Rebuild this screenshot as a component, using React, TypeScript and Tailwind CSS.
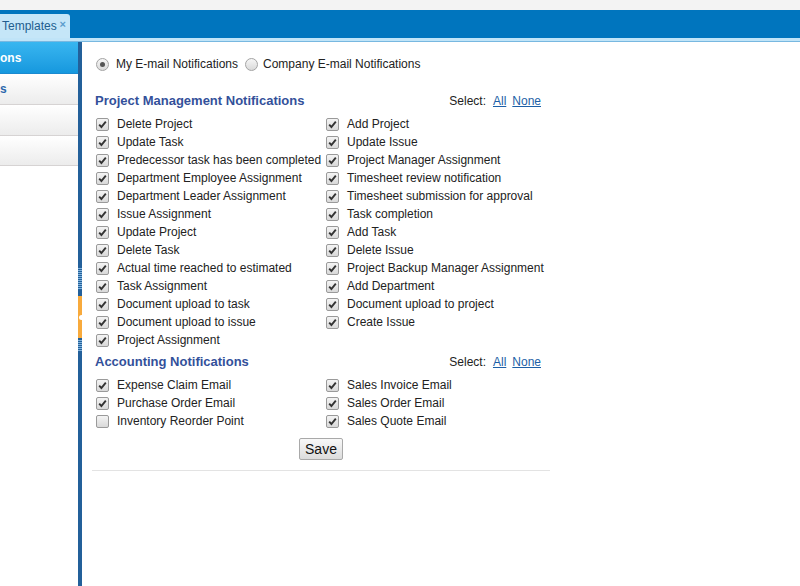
import React from 'react'

const pmLeft = [
  'Delete Project',
  'Update Task',
  'Predecessor task has been completed',
  'Department Employee Assignment',
  'Department Leader Assignment',
  'Issue Assignment',
  'Update Project',
  'Delete Task',
  'Actual time reached to estimated',
  'Task Assignment',
  'Document upload to task',
  'Document upload to issue',
  'Project Assignment',
]

const pmRight = [
  'Add Project',
  'Update Issue',
  'Project Manager Assignment',
  'Timesheet review notification',
  'Timesheet submission for approval',
  'Task completion',
  'Add Task',
  'Delete Issue',
  'Project Backup Manager Assignment',
  'Add Department',
  'Document upload to project',
  'Create Issue',
]

const accLeft = [
  { label: 'Expense Claim Email', on: true },
  { label: 'Purchase Order Email', on: true },
  { label: 'Inventory Reorder Point', on: false },
]

const accRight = [
  { label: 'Sales Invoice Email', on: true },
  { label: 'Sales Order Email', on: true },
  { label: 'Sales Quote Email', on: true },
]

function Box({ on }: { on: boolean }) {
  return (
    <span className="w-[13px] h-[13px] shrink-0 rounded-[2px] border border-[#9a9a9a] bg-gradient-to-b from-[#f4f4f4] to-[#d9d9d9] flex items-center justify-center">
      {on && (
        <svg width="9" height="9" viewBox="0 0 9 9">
          <path d="M1.2 4.6 L3.4 7 L7.8 1.6" fill="none" stroke="#333" strokeWidth="1.9" />
        </svg>
      )}
    </span>
  )
}

function Radio({ on }: { on: boolean }) {
  return (
    <span className="w-[13px] h-[13px] shrink-0 rounded-full border border-[#a3a3a3] bg-gradient-to-b from-[#f6f6f6] to-[#dadada] flex items-center justify-center">
      {on && <span className="w-[5px] h-[5px] rounded-full bg-[#555]" />}
    </span>
  )
}

function Item({ label, on }: { label: string; on: boolean }) {
  return (
    <div className="h-[18px] flex items-center gap-[8px] whitespace-nowrap">
      <Box on={on} />
      <span>{label}</span>
    </div>
  )
}

function SectionHead({ title }: { title: string }) {
  return (
    <div className="h-[16px] leading-[16px] flex justify-between pl-[3px] pr-[9px]">
      <span className="text-[13px] font-bold text-[#33509a]">{title}</span>
      <span className="text-[12px] text-[#222]">
        Select:
        <a className="ml-[7px] text-[#1d5fa6] underline">All</a>
        <a className="ml-[6px] text-[#1d5fa6] underline">None</a>
      </span>
    </div>
  )
}

export default function App() {
  const pmRows = pmLeft.map((l, i) => [l, pmRight[i]] as const)

  return (
    <div className="w-[800px] h-[586px] overflow-hidden bg-white flex flex-col font-['Liberation_Sans',Arial,sans-serif] text-[12px] text-[#222]">
      {/* Top chrome */}
      <div className="h-[10px] bg-[#f3f3f3]" />
      <div className="h-[28px] bg-[#0075be] flex items-end">
        <div className="h-[24px] w-[70px] bg-[#c5e6f8] rounded-tr-[3px] flex items-center pl-[2px] relative">
          <span className="text-[12px] text-[#215d8e]">Templates</span>
          <span className="absolute right-[4px] top-[2px] text-[11px] font-bold text-[#5b9bcc]">×</span>
        </div>
      </div>
      <div className="h-[3px] bg-[#c0e4f8]" />
      <div className="h-[1px] bg-[#78b8e0]" />

      <div className="flex flex-1 min-h-0">
        {/* Sidebar (scrolled horizontally, only word endings visible) */}
        <div className="w-[78px] shrink-0 overflow-hidden bg-white">
          <div className="h-[32px] bg-gradient-to-b from-[#38b6f0] to-[#1598de] border-b border-[#1a8ad0] flex items-center whitespace-nowrap">
            <span className="text-[12px] font-bold text-white">ons</span>
          </div>
          <div className="h-[31px] bg-gradient-to-b from-[#ffffff] to-[#ececec] border-b border-[#d6d3d3] flex items-center whitespace-nowrap">
            <span className="text-[12px] font-bold text-[#2c68ad]">s</span>
          </div>
          <div className="h-[31px] bg-gradient-to-b from-[#ffffff] to-[#ececec] border-b border-[#d6d3d3]" />
          <div className="h-[30px] bg-gradient-to-b from-[#ffffff] to-[#ececec] border-b border-[#d6d3d3]" />
        </div>

        {/* Splitter */}
        <div className="w-[4px] shrink-0 bg-[#23609a] flex flex-col">
          <div className="h-[226px]" />
          <div className="h-[22px] bg-[repeating-linear-gradient(to_bottom,#7fb2dc_0px,#7fb2dc_1px,#23609a_1px,#23609a_2px)]" />
          <div className="h-[6px]" />
          <div className="h-[42px] bg-[#f8aa3c] flex items-center justify-center">
            <span className="w-[3px] h-[5px] bg-white rounded-l-full" />
          </div>
          <div className="h-[2px]" />
          <div className="h-[12px] bg-[repeating-linear-gradient(to_bottom,#7fb2dc_0px,#7fb2dc_1px,#23609a_1px,#23609a_2px)]" />
        </div>

        {/* Content */}
        <div className="flex-1 pl-[10px]">
          <div className="w-[458px]">
            <div className="mt-[13px] h-[18px] pl-[4px] flex items-center whitespace-nowrap">
              <Radio on />
              <span className="ml-[7px]">My E-mail Notifications</span>
              <span className="ml-[7px]"><Radio on={false} /></span>
              <span className="ml-[5px]">Company E-mail Notifications</span>
            </div>

            <div className="mt-[20px]">
              <SectionHead title="Project Management Notifications" />
            </div>
            <div className="mt-[6px] pl-[4px] grid grid-cols-[230px_1fr]">
              {pmRows.map(([l, r], i) => (
                <React.Fragment key={i}>
                  <Item label={l} on />
                  {r ? <Item label={r} on /> : <div />}
                </React.Fragment>
              ))}
            </div>

            <div className="mt-[5px]">
              <SectionHead title="Accounting Notifications" />
            </div>
            <div className="mt-[6px] pl-[4px] grid grid-cols-[230px_1fr]">
              {accLeft.map((l, i) => (
                <React.Fragment key={i}>
                  <Item label={l.label} on={l.on} />
                  <Item label={accRight[i].label} on={accRight[i].on} />
                </React.Fragment>
              ))}
            </div>

            <div className="mt-[8px] flex justify-center">
              <button className="h-[22px] px-[5px] text-[14px] text-[#111] border border-[#a9a9a9] rounded-[2px] bg-gradient-to-b from-[#f8f8f8] to-[#dcdcdc]">
                Save
              </button>
            </div>
            <div className="mt-[10px] border-t border-[#e3e3e3]" />
          </div>
        </div>
      </div>
    </div>
  )
}
